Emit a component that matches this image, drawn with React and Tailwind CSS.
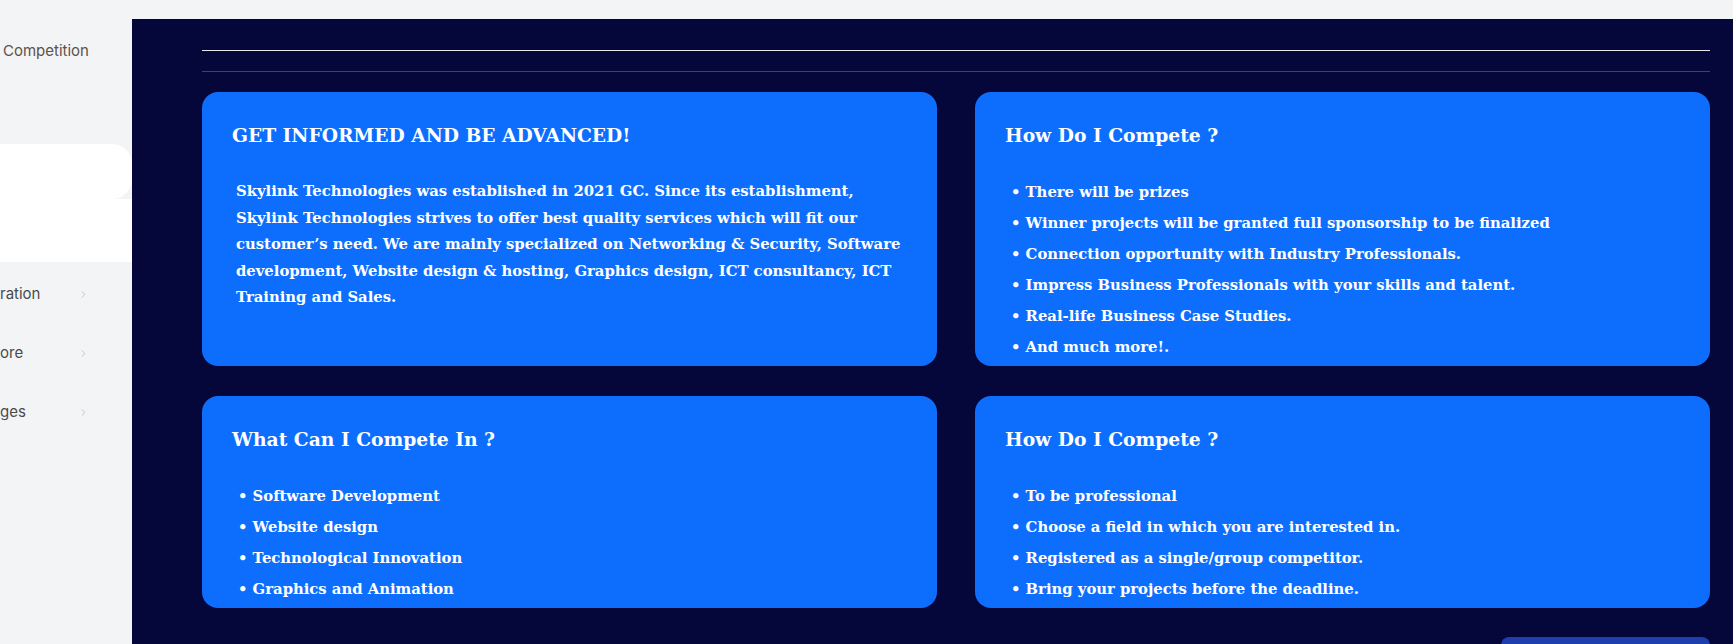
import React from "react";
import { ChevronRight } from "lucide-react";

const serif = { fontFamily: '"DejaVu Serif", "Liberation Serif", serif' };

function Card({ title, children }) {
  return (
    <div className="rounded-[16px] bg-[#0d6efd] pt-[31px] pb-[4px] pl-[30px] pr-[30px] text-white" style={serif}>
      <h2 className="text-[18.7px] font-bold leading-[24px]">{title}</h2>
      {children}
    </div>
  );
}

function Bullets({ items }) {
  return (
    <ul className="mt-[29px] pl-[6px]">
      {items.map((t) => (
        <li key={t} className="text-[14.8px] font-bold leading-[31px] whitespace-nowrap">
          {"\u2022 " + t}
        </li>
      ))}
    </ul>
  );
}

export default function App() {
  return (
    <div className="flex h-[644px] w-[1733px] overflow-hidden bg-[#f3f4f6]" style={{ fontFamily: 'Inter, "Noto Sans", sans-serif' }}>
      <aside className="flex w-[132px] shrink-0 flex-col">
        <div className="pt-[41px] text-[15px] leading-[20px] text-[#5c5248] whitespace-nowrap pl-[3px]">Competition</div>
        <div className="mt-[83px] h-[55px] shrink-0 rounded-r-[20px] bg-white" />
        <div className="h-[63px] shrink-0 bg-white" />
        <div className="mt-[3px] flex flex-col text-[15px] text-[#4b4b4b]">
          {["ration", "ore", "ges"].map((t) => (
            <div key={t} className="flex h-[59px] shrink-0 items-center">
              <span className="w-[78px]">{t}</span>
              <ChevronRight size={11} strokeWidth={2} className="text-[#b8bec8]" />
            </div>
          ))}
        </div>
      </aside>
      <div className="flex flex-1 flex-col pt-[19px]">
        <main className="flex h-[625px] flex-col overflow-hidden bg-[#05063a] pl-[70px] pr-[23px] pt-[31px]">
          <div className="h-px shrink-0 bg-[#e5e7eb]" />
          <div className="mt-[20px] h-px shrink-0 bg-[#3f4170]" />
          <div className="mt-[20px] grid shrink-0 grid-cols-2 gap-x-[38px] gap-y-[30px]">
            <Card title="GET INFORMED AND BE ADVANCED!">
              <p className="mt-[31px] pl-[4px] text-[14.8px] font-bold leading-[26.5px]">
                Skylink Technologies was established in 2021 GC. Since its establishment, Skylink Technologies strives to offer best quality services which will fit our customer’s need. We are mainly specialized on Networking &amp; Security, Software development, Website design &amp; hosting, Graphics design, ICT consultancy, ICT Training and Sales.
              </p>
            </Card>
            <Card title="How Do I Compete ?">
              <Bullets
                items={[
                  "There will be prizes",
                  "Winner projects will be granted full sponsorship to be finalized",
                  "Connection opportunity with Industry Professionals.",
                  "Impress Business Professionals with your skills and talent.",
                  "Real-life Business Case Studies.",
                  "And much more!.",
                ]}
              />
            </Card>
            <Card title="What Can I Compete In ?">
              <Bullets
                items={[
                  "Software Development",
                  "Website design",
                  "Technological Innovation",
                  "Graphics and Animation",
                ]}
              />
            </Card>
            <Card title="How Do I Compete ?">
              <Bullets
                items={[
                  "To be professional",
                  "Choose a field in which you are interested in.",
                  "Registered as a single/group competitor.",
                  "Bring your projects before the deadline.",
                ]}
              />
            </Card>
          </div>
          <div className="mt-[29px] flex shrink-0 justify-end">
            <div className="h-[40px] w-[209px] rounded-[8px] bg-[#1e3eae]" />
          </div>
        </main>
      </div>
    </div>
  );
}
